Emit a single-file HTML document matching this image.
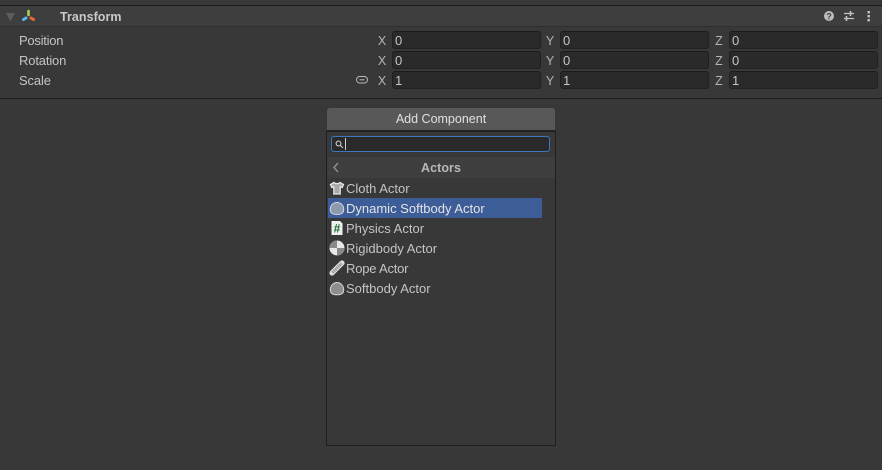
<!DOCTYPE html>
<html><head><meta charset="utf-8"><style>
html,body{margin:0;padding:0;width:882px;height:470px;overflow:hidden;background:#383838}
body{font-family:"Liberation Sans",sans-serif;font-size:13px;color:#c4c4c4;position:relative}
.a{position:absolute;white-space:nowrap}
.t{position:absolute;white-space:nowrap;line-height:20px;height:20px;letter-spacing:-.15px}
.f{position:absolute;height:18px;box-sizing:border-box;background:#2a2a2a;border:1px solid #212121;border-top-color:#1b1b1b;border-radius:3px;line-height:17px;padding-left:2px;color:#c4c4c4}
.l{position:absolute;line-height:21px;color:#b4b4b4;width:12px;text-align:center;font-size:12.5px}
.i{position:absolute;left:329px;width:16px;height:16px}
.m{position:absolute;white-space:nowrap;line-height:20px;height:20px;left:346px}
</style></head><body>
<div class="a" style="left:0;top:5px;width:882px;height:1px;background:#1a1a1a"></div>
<div class="a" style="left:0;top:6px;width:882px;height:20px;background:#3e3e3e"></div>
<div class="a" style="left:0;top:26px;width:882px;height:1px;background:#303030"></div>
<div class="a" style="left:0;top:98px;width:882px;height:1px;background:#1c1c1c"></div>

<svg class="a" style="left:5px;top:12px" width="11" height="10"><path d="M1 1H10L5.500 9.500Z" fill="#5c5c5c"/></svg>
<svg class="a" style="left:21px;top:8px" width="15" height="14" fill="none" stroke-linecap="round">
<path d="M7.500 3V7" stroke="#a5d64c" stroke-width="2.600"/>
<path d="M10 10L12.500 11.500" stroke="#e8673c" stroke-width="3"/>
<path d="M5 10L2.500 11.500" stroke="#5cb8ea" stroke-width="3"/>
</svg>
<div class="t" style="left:60px;top:7px;font-weight:bold;color:#c8c8c8;letter-spacing:.05px;font-size:12.500px">Transform</div>

<svg class="a" style="left:823px;top:10px" width="12" height="12"><circle cx="6" cy="6" r="5" fill="#bdbdbd"/><text x="6" y="9.300" font-size="9" font-weight="bold" text-anchor="middle" fill="#3e3e3e" font-family="Liberation Sans">?</text></svg>
<svg class="a" style="left:843px;top:10px" width="12" height="12" fill="none" stroke="#c4c4c4" stroke-width="1.200"><path d="M1 3.500H11M1 8.500H11"/><path d="M7.500 1V6M3.500 6V11" stroke-width="1.600"/></svg>
<svg class="a" style="left:866px;top:10px" width="6" height="12" fill="#c4c4c4"><rect x="1.500" y="1" width="2.400" height="2.400"/><rect x="1.500" y="5" width="2.400" height="2.400"/><rect x="1.500" y="9" width="2.400" height="2.400"/></svg>

<div class="t" style="left:19px;top:31px;letter-spacing:-.25px">Position</div>
<div class="t" style="left:19px;top:51px">Rotation</div>
<div class="t" style="left:19px;top:71px">Scale</div>

<svg class="a" style="left:355px;top:74px" width="14" height="12" fill="none" stroke="#b8b8b8" stroke-width="1"><rect x="1.500" y="2.500" width="11" height="6.500" rx="3.200"/><path d="M4.500 5.800H9.500"/></svg>

<div class="l" style="left:376px;top:31px">X</div><div class="f" style="left:392px;top:31px;width:149px">0</div>
<div class="l" style="left:544px;top:31px">Y</div><div class="f" style="left:560px;top:31px;width:149px">0</div>
<div class="l" style="left:713px;top:31px">Z</div><div class="f" style="left:729px;top:31px;width:149px">0</div>
<div class="l" style="left:376px;top:51px">X</div><div class="f" style="left:392px;top:51px;width:149px">0</div>
<div class="l" style="left:544px;top:51px">Y</div><div class="f" style="left:560px;top:51px;width:149px">0</div>
<div class="l" style="left:713px;top:51px">Z</div><div class="f" style="left:729px;top:51px;width:149px">0</div>
<div class="l" style="left:376px;top:71px">X</div><div class="f" style="left:392px;top:71px;width:149px">1</div>
<div class="l" style="left:544px;top:71px">Y</div><div class="f" style="left:560px;top:71px;width:149px">1</div>
<div class="l" style="left:713px;top:71px">Z</div><div class="f" style="left:729px;top:71px;width:149px">1</div>

<div class="a" style="left:327px;top:108px;width:228px;height:22px;background:#585858;border-radius:3px 3px 0 0;box-shadow:0 1px 0 #242424;text-align:center;line-height:22px;color:#e0e0e0;font-size:12.500px">Add Component</div>

<div class="a" style="left:326px;top:131px;width:230px;height:315px;box-sizing:border-box;border:1px solid #1f1f1f;background:#383838"></div>
<div class="a" style="left:327px;top:157px;width:228px;height:21px;background:#3e3e3e"></div>
<div class="a" style="left:331px;top:136px;width:219px;height:16px;box-sizing:border-box;background:#2a2a2a;border:1px solid #3a79bb;border-radius:3px"></div>
<svg class="a" style="left:335px;top:140px" width="9" height="9" fill="none" stroke="#c4c4c4" stroke-width="1.100"><circle cx="3.500" cy="3.500" r="2.400"/><path d="M5.300 5.300L8 8"/></svg>
<div class="a" style="left:345px;top:138px;width:1px;height:12px;background:#d0d0d0"></div>
<svg class="a" style="left:332px;top:162px" width="8" height="11" fill="none" stroke="#8a8a8a" stroke-width="1.600"><path d="M6 1L2 5.500L6 10"/></svg>
<div class="t" style="left:327px;top:158px;width:228px;text-align:center;font-weight:bold;color:#b8b8b8;font-size:12.500px;letter-spacing:.05px">Actors</div>

<div class="a" style="left:328px;top:198px;width:214px;height:20px;background:#3c5d98"></div>

<div class="m" style="top:179px">Cloth Actor</div>
<div class="m" style="top:199px;color:#e4e4e4">Dynamic Softbody Actor</div>
<div class="m" style="top:219px">Physics Actor</div>
<div class="m" style="top:239px">Rigidbody Actor</div>
<div class="m" style="top:259px;letter-spacing:-.2px">Rope Actor</div>
<div class="m" style="top:279px">Softbody Actor</div>

<svg class="i" style="top:180px" viewBox="0 0 16 16"><path d="M5 2.500L1.500 4.500L2.800 7.500L4.800 6.800V14H11.200V6.800L13.200 7.500L14.500 4.500L11 2.500C10 4 6 4 5 2.500Z" fill="#a8a8a8" stroke="#e6e6e6" stroke-width="1.300"/></svg>
<svg class="i" style="top:200px" viewBox="0 0 16 16"><path d="M1.300 9.500C1.300 5 4.500 2.500 8 2.500S14.700 5 14.700 9.500C14.700 13.500 12 14.500 8 14.500S1.300 13.500 1.300 9.500Z" fill="#8d99ad" stroke="#d6dbe4" stroke-width="1"/></svg>
<svg class="i" style="top:220px" viewBox="0 0 16 16"><path d="M2.500 1H11L13.500 3.500V15H2.500Z" fill="#eef2ee"/><text x="8" y="12.500" font-size="12" font-weight="bold" text-anchor="middle" fill="#17652f" font-family="Liberation Sans">#</text></svg>
<svg class="i" style="top:240px" viewBox="0 0 16 16"><circle cx="8" cy="8" r="7.500" fill="#e8e8e8"/><path d="M8 8V.5A7.500 7.500 0 0 0 .5 8ZM8 8V15.500A7.500 7.500 0 0 0 15.500 8Z" fill="#8a8a8a"/></svg>
<svg class="i" style="top:260px" viewBox="0 0 16 16"><path d="M3 13L13 3" stroke="#dcdcdc" stroke-width="5.200" stroke-linecap="round"/><path d="M3.500 12.500L12.500 3.500" stroke="#8c8c8c" stroke-width="3" stroke-dasharray="1.200 .8"/></svg>
<svg class="i" style="top:280px" viewBox="0 0 16 16"><path d="M1.300 10C1.300 5.500 4.500 2.500 8 2.500S14.700 5.500 14.700 10C14.700 13.800 12 14.800 8 14.800S1.300 13.800 1.300 10Z" fill="#8e8e8e" stroke="#d4d4d4" stroke-width="1"/></svg>
</body></html>
